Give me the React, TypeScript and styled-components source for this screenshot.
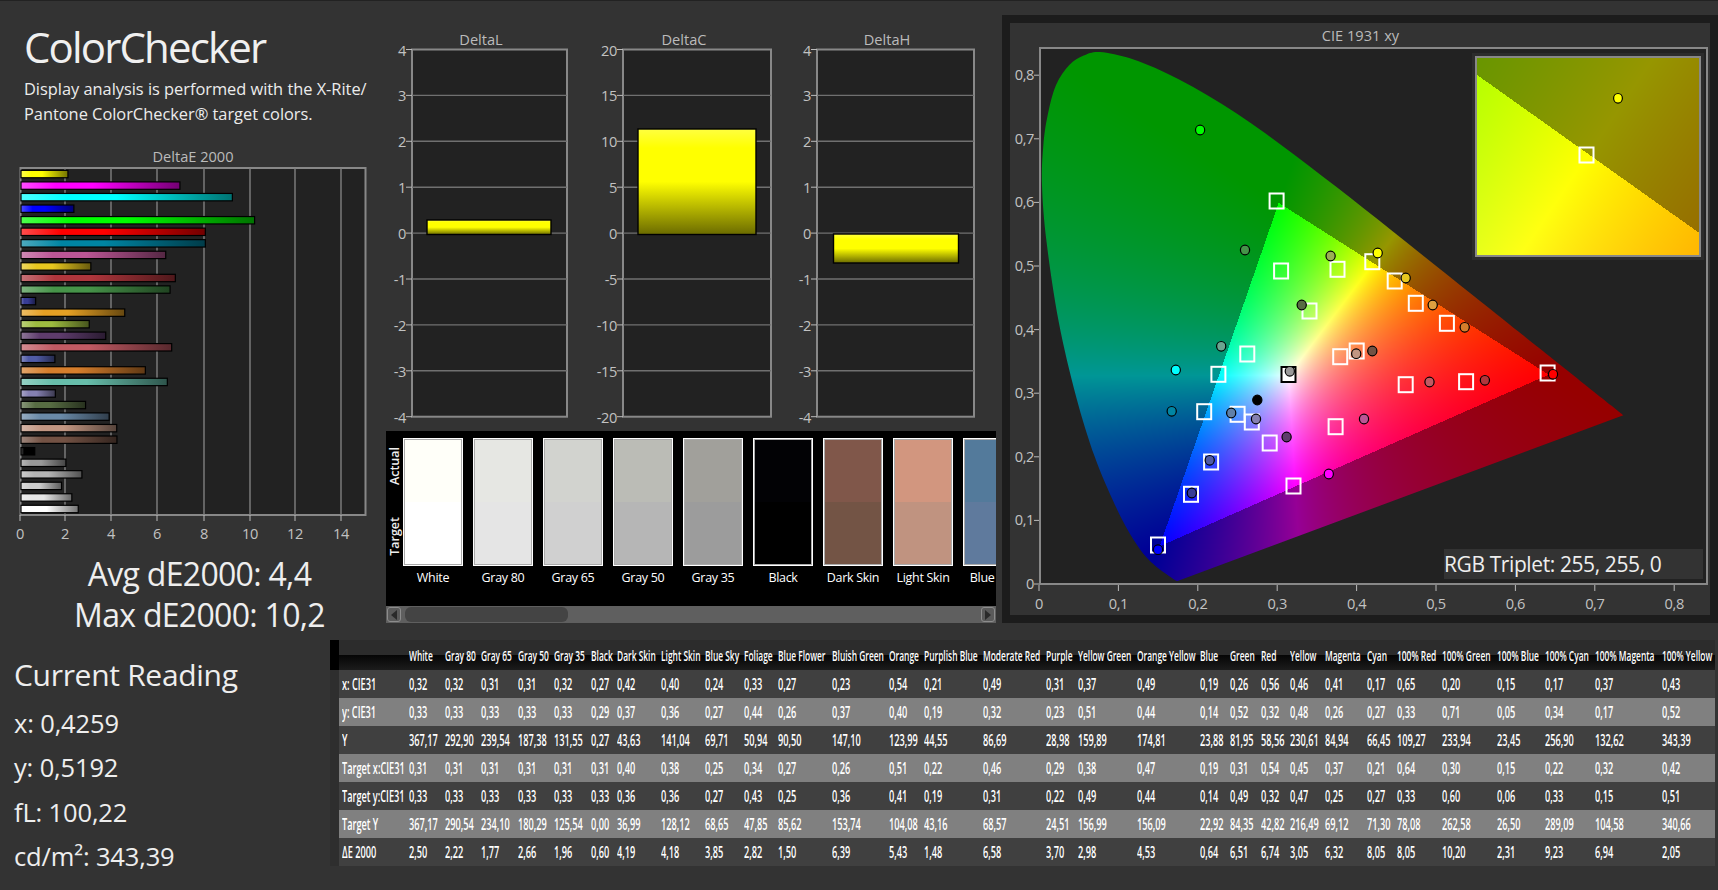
import { useEffect, useRef } from 'react';
import styled, { createGlobalStyle } from 'styled-components';

const NAMES = ['White', 'Gray 80', 'Gray 65', 'Gray 50', 'Gray 35', 'Black', 'Dark Skin', 'Light Skin', 'Blue Sky', 'Foliage', 'Blue Flower', 'Bluish Green', 'Orange', 'Purplish Blue', 'Moderate Red', 'Purple', 'Yellow Green', 'Orange Yellow', 'Blue', 'Green', 'Red', 'Yellow', 'Magenta', 'Cyan', '100% Red', '100% Green', '100% Blue', '100% Cyan', '100% Magenta', '100% Yellow'];

const ROWS: [string, string][] = [
	['x: CIE31', '0,32 0,32 0,31 0,31 0,32 0,27 0,42 0,40 0,24 0,33 0,27 0,23 0,54 0,21 0,49 0,31 0,37 0,49 0,19 0,26 0,56 0,46 0,41 0,17 0,65 0,20 0,15 0,17 0,37 0,43'],
	['y: CIE31', '0,33 0,33 0,33 0,33 0,33 0,29 0,37 0,36 0,27 0,44 0,26 0,37 0,40 0,19 0,32 0,23 0,51 0,44 0,14 0,52 0,32 0,48 0,26 0,27 0,33 0,71 0,05 0,34 0,17 0,52'],
	['Y', '367,17 292,90 239,54 187,38 131,55 0,27 43,63 141,04 69,71 50,94 90,50 147,10 123,99 44,55 86,69 28,98 159,89 174,81 23,88 81,95 58,56 230,61 84,94 66,45 109,27 233,94 23,45 256,90 132,62 343,39'],
	['Target x:CIE31', '0,31 0,31 0,31 0,31 0,31 0,31 0,40 0,38 0,25 0,34 0,27 0,26 0,51 0,22 0,46 0,29 0,38 0,47 0,19 0,31 0,54 0,45 0,37 0,21 0,64 0,30 0,15 0,22 0,32 0,42'],
	['Target y:CIE31', '0,33 0,33 0,33 0,33 0,33 0,33 0,36 0,36 0,27 0,43 0,25 0,36 0,41 0,19 0,31 0,22 0,49 0,44 0,14 0,49 0,32 0,47 0,25 0,27 0,33 0,60 0,06 0,33 0,15 0,51'],
	['Target Y', '367,17 290,54 234,10 180,29 125,54 0,00 36,99 128,12 68,65 47,85 85,62 153,74 104,08 43,16 68,57 24,51 156,99 156,09 22,92 84,35 42,82 216,49 69,12 71,30 78,08 262,58 26,50 289,09 104,58 340,66'],
	['ΔE 2000', '2,50 2,22 1,77 2,66 1,96 0,60 4,19 4,18 3,85 2,82 1,50 6,39 5,43 1,48 6,58 3,70 2,98 4,53 0,64 6,51 6,74 3,05 6,32 8,05 8,05 10,20 2,31 9,23 6,94 2,05'],
];

// left edge of every data column in the table, in page pixels
const COLUMN_X = [406.6, 442, 478.6, 515, 551.3, 588, 614.6, 658, 702, 741.3, 775.3, 829, 886, 921.3, 980, 1043.3, 1075.3, 1134, 1197.3, 1227.3, 1258, 1287.3, 1322.6, 1364.3, 1394, 1439.3, 1494.3, 1542.3, 1592.3, 1659, 1715];

// same order as the table, the bars run bottom to top
const BAR_COLORS = ['#ffffff', '#e6e6e6', '#cccccc', '#b4b4b4', '#999999', '#000000', '#735244', '#c29682', '#6a8aa8', '#576c43', '#8580b1', '#67bdaa', '#d67e2c', '#505ba6', '#c15a63', '#5e3c6c', '#9dbc40', '#e5a024', '#383d96', '#469449', '#af363c', '#e7c71f', '#bb5695', '#0085a3', '#ff0000', '#00ff00', '#0000ff', '#00ffff', '#ff00ff', '#ffff00'];

const SWATCHES = [
	{ name: 'White', actual: '#fffff9', target: '#ffffff' },
	{ name: 'Gray 80', actual: '#e6e7e3', target: '#e5e5e5' },
	{ name: 'Gray 65', actual: '#d2d3cf', target: '#d0d0d0' },
	{ name: 'Gray 50', actual: '#bbbcb6', target: '#b6b6b6' },
	{ name: 'Gray 35', actual: '#a1a09b', target: '#9c9c9c' },
	{ name: 'Black', actual: '#020205', target: '#000000' },
	{ name: 'Dark Skin', actual: '#80574a', target: '#735445' },
	{ name: 'Light Skin', actual: '#d2967f', target: '#c09380' },
	{ name: 'Blue Sky', actual: '#537a9b', target: '#5f7a9d' },
];

const DELTAS = [
	{ title: 'DeltaL', ticks: [4, 3, 2, 1, 0, -1, -2, -3, -4], gutter: 19, plot: 156, barX: 15, barW: 124, top: 220, bottom: 234.5 },
	{ title: 'DeltaC', ticks: [20, 15, 10, 5, 0, -5, -10, -15, -20], gutter: 27, plot: 149, barX: 15, barW: 118, top: 129, bottom: 234.5 },
	{ title: 'DeltaH', ticks: [4, 3, 2, 1, 0, -1, -2, -3, -4], gutter: 18, plot: 158, barX: 16.5, barW: 125, top: 234, bottom: 263 },
];

const LOCUS = [[0.1741, 0.005], [0.174, 0.005], [0.1738, 0.0049], [0.1736, 0.0049], [0.1733, 0.0048], [0.173, 0.0048], [0.1726, 0.0048], [0.1721, 0.0048], [0.1714, 0.0051], [0.1703, 0.0058], [0.1689, 0.0069], [0.1669, 0.0086], [0.1644, 0.0109], [0.1611, 0.0138], [0.1566, 0.0177], [0.151, 0.0227], [0.144, 0.0297], [0.1355, 0.0399], [0.1241, 0.0578], [0.1096, 0.0868], [0.0913, 0.1327], [0.0687, 0.2007], [0.0454, 0.295], [0.0235, 0.4127], [0.0082, 0.5384], [0.0025, 0.6274], [0.0042, 0.69], [0.0097, 0.7374], [0.0202, 0.7846], [0.0369, 0.816], [0.055, 0.831], [0.0756, 0.8365], [0.1142, 0.8262], [0.1547, 0.8059], [0.1929, 0.7816], [0.2296, 0.7543], [0.2658, 0.7243], [0.3016, 0.6923], [0.3373, 0.6589], [0.3731, 0.6245], [0.4087, 0.5896], [0.4441, 0.5547], [0.4788, 0.5202], [0.5125, 0.4866], [0.5448, 0.4544], [0.5752, 0.4242], [0.6029, 0.3965], [0.627, 0.3725], [0.6482, 0.3514], [0.6658, 0.334], [0.6801, 0.3197], [0.6915, 0.3083], [0.7006, 0.2993], [0.7079, 0.292], [0.714, 0.2859], [0.719, 0.2809], [0.723, 0.277], [0.726, 0.274], [0.7283, 0.2717], [0.73, 0.27], [0.732, 0.268], [0.7334, 0.2666], [0.7347, 0.2653]];

// measured marker places inside the plot, in plot pixels
const TARGETS = [[235.6, 152], [240.1, 222], [296.5, 220.3], [331.3, 212.7], [353.7, 232], [374.8, 254.3], [268.5, 262], [405.9, 274.3], [206.3, 305], [177.4, 325.3], [299.2, 307.7], [315.7, 302], [364.7, 335.7], [425.1, 332.7], [506.6, 324], [163.2, 362.7], [196.6, 365.3], [210.8, 373], [228.7, 394], [294.6, 377.7], [170.1, 413], [252.5, 437], [150, 445.3], [117, 496]];

const READINGS: [number, number, string][] = [
	[159.1, 81, '#00ff00'], [204, 201, '#469449'], [289.6, 207, '#9aae55'], [336.7, 204, '#ffff00'], [364.7, 229, '#e7c71f'], [391.7, 256, '#dea040'], [260.7, 256, '#576c43'], [423.7, 278.3, '#d67e2c'],
	[180.2, 297.3, '#6aa590'], [134.8, 321, '#00ffff'], [248.8, 322.3, '#999999'], [216.3, 351, '#000000'], [315.2, 304.7, '#c29682'], [331.3, 302, '#735244'], [388.5, 333, '#c15a63'], [443.9, 331.3, '#af363c'], [512, 325.3, '#ff0000'],
	[130.7, 362.3, '#0085a3'], [190.2, 364, '#6080a8'], [215, 370, '#8580b1'], [323, 370, '#bb5695'], [245.6, 388, '#5e3c6c'], [168.7, 411.3, '#505ba6'], [287.8, 425, '#ff00ff'], [150.8, 444, '#383d96'], [117, 500.7, '#0000ff'],
];

const shade = (hex: string, towards: number, amount: number) => {
	const n = parseInt(hex.slice(1), 16);
	const part = (v: number) => Math.round(v + (towards - v) * amount);
	return `rgb(${part((n >> 16) & 255)},${part((n >> 8) & 255)},${part(n & 255)})`;
};

const chromaColor = (x: number, y: number) => {
	const X = x / y;
	const Z = (1 - x - y) / y;
	const lin = [3.2406 * X - 1.5372 - 0.4986 * Z, -0.9689 * X + 1.8758 + 0.0415 * Z, 0.0557 * X - 0.204 + 1.057 * Z];
	const outside = lin.some((v) => v < 0);
	const clipped = lin.map((v) => Math.max(v, 0));
	const peak = Math.max(...clipped, 0.0001);
	const gain = outside ? 150 : 255;
	return clipped.map((v) => (v / peak) * gain);
};

const tracePath = (ctx: CanvasRenderingContext2D) => {
	const pts = LOCUS.map(([x, y]) => [x * 794 - 1, 535 - y * 636]);
	ctx.beginPath();
	ctx.moveTo(pts[0][0], pts[0][1]);
	for (let i = 0; i < pts.length - 1; i++) {
		const a = pts[Math.max(i - 1, 0)];
		const b = pts[i];
		const c = pts[i + 1];
		const d = pts[Math.min(i + 2, pts.length - 1)];
		ctx.bezierCurveTo(b[0] + (c[0] - a[0]) / 6, b[1] + (c[1] - a[1]) / 6, c[0] - (d[0] - b[0]) / 6, c[1] - (d[1] - b[1]) / 6, c[0], c[1]);
	}
	ctx.closePath();
};

const GamutCanvas = ({ width, height, toXY, locus }: { width: number; height: number; toXY: (px: number, py: number) => [number, number]; locus?: boolean }) => {
	const ref = useRef<HTMLCanvasElement>(null);

	useEffect(() => {
		const ctx = ref.current?.getContext('2d');
		if (!ctx) return;
		const buffer = document.createElement('canvas');
		buffer.width = width;
		buffer.height = height;
		const bufferCtx = buffer.getContext('2d')!;
		const image = bufferCtx.createImageData(width, height);
		for (let py = 0; py < height; py++) {
			for (let px = 0; px < width; px++) {
				const [x, y] = toXY(px, py);
				const [r, g, b] = chromaColor(x, Math.max(y, 0.001));
				const i = (py * width + px) * 4;
				image.data[i] = r;
				image.data[i + 1] = g;
				image.data[i + 2] = b;
				image.data[i + 3] = 255;
			}
		}
		bufferCtx.putImageData(image, 0, 0);
		ctx.save();
		ctx.clearRect(0, 0, width, height);
		if (locus) {
			tracePath(ctx);
			ctx.clip();
		}
		ctx.drawImage(buffer, 0, 0);
		ctx.restore();
	}, [width, height, toXY, locus]);

	return <Layer ref={ref} width={width} height={height} />;
};

const plotToXY = (px: number, py: number): [number, number] => [(px + 1) / 794, (535 - py) / 636];
const insetToXY = (px: number, py: number): [number, number] => [0.419 + (px + 1477 - 1586.5) / 4500, 0.505 - (py + 59 - 155.7) / 4030];

const DeltaEChart = () => {
	const grid = [65, 111, 157, 204, 250, 295, 341];
	const ticks = [20, ...grid];
	return (
		<ChartSvg width={386} height={378}>
			<defs>
				{BAR_COLORS.map((color, i) => (
					<linearGradient key={i} id={`bar-${i}`}>
						<stop offset='0' stopColor={shade(color, 255, 0.3)} />
						<stop offset='0.22' stopColor={color} />
						<stop offset='0.45' stopColor={color} />
						<stop offset='1' stopColor={shade(color, 0, 0.55)} />
					</linearGradient>
				))}
			</defs>
			<rect x={20.5} y={1} width={345} height={347} fill='#222' stroke='#888' strokeWidth={2} />
			{grid.map((x) => (
				<line key={x} x1={x} x2={x} y1={1} y2={348} stroke='#808080' strokeWidth={1.4} />
			))}
			{ticks.map((x) => (
				<line key={x} x1={x} x2={x} y1={348} y2={354} stroke='#bbb' />
			))}
			{BAR_COLORS.map((_, i) => {
				const value = parseFloat(ROWS[6][1].split(' ')[i].replace(',', '.'));
				return <rect key={i} x={21} y={342 - i * 11.55 - 3.7} width={value * 22.9} height={7.4} fill={`url(#bar-${i})`} stroke='#000' strokeWidth={1.2} />;
			})}
			{ticks.map((x, i) => (
				<AxisText key={x} x={x} y={372} textAnchor='middle'>
					{i * 2}
				</AxisText>
			))}
		</ChartSvg>
	);
};

const DeltaChart = ({ title, ticks, gutter, plot, barX, barW, top, bottom }: (typeof DELTAS)[number]) => {
	const y0 = 7.5;
	const step = 45.9;
	const gradientId = `delta-${title}`;
	return (
		<DeltaBlock>
			<ChartTitle>{title}</ChartTitle>
			<DeltaSvg width={176} height={385}>
				<defs>
					<linearGradient id={gradientId} x2='0' y2='1'>
						<stop offset='0' stopColor='#ffff40' />
						<stop offset='0.18' stopColor='#ffff00' />
						<stop offset='0.5' stopColor='#ffff00' />
						<stop offset='1' stopColor='#6b6b00' />
					</linearGradient>
				</defs>
				<rect x={gutter} y={y0} width={plot - 1} height={step * 8} fill='#222' stroke='#888' strokeWidth={2} />
				{ticks.map((tick, i) => (
					<g key={tick}>
						{i > 0 && i < 8 && <line x1={gutter} x2={gutter + plot - 1} y1={y0 + i * step} y2={y0 + i * step} stroke='#707070' strokeWidth={1.4} />}
						<line x1={gutter - 6} x2={gutter} y1={y0 + i * step} y2={y0 + i * step} stroke='#bbb' />
						<AxisText x={gutter - 6} y={y0 + i * step + 6} textAnchor='end'>
							{tick}
						</AxisText>
					</g>
				))}
				<rect x={gutter + barX} y={top - 42} width={barW} height={bottom - top} fill={`url(#${gradientId})`} stroke='#000' strokeWidth={1.4} />
			</DeltaSvg>
		</DeltaBlock>
	);
};

const CieChart = () => {
	const ticks = ['0', '0,1', '0,2', '0,3', '0,4', '0,5', '0,6', '0,7', '0,8'];
	return (
		<CieFrame>
			<CieTitle>CIE 1931 xy</CieTitle>
			<CieGrid>
				<YAxis width={29} height={540}>
					{ticks.map((tick, i) => (
						<g key={tick}>
							<line x1={24} x2={29} y1={537 - i * 63.6} y2={537 - i * 63.6} stroke='#bbb' />
							<AxisText x={24} y={537 - i * 63.6 + 5} textAnchor='end'>
								{tick}
							</AxisText>
						</g>
					))}
				</YAxis>
				<CiePlot>
					<GamutCanvas width={665} height={534} toXY={plotToXY} locus />
					<MarkerLayer width={665} height={534}>
						{TARGETS.map(([x, y]) => (
							<rect key={`${x}-${y}`} x={x - 7} y={y - 7.5} width={14} height={15} fill='none' stroke='#fff' strokeWidth={2} />
						))}
						<rect x={240.5} y={318} width={14} height={15} fill='#fff' stroke='#000' strokeWidth={2} />
						{READINGS.map(([x, y, color]) => (
							<ellipse key={`${x}-${y}`} cx={x} cy={y} rx={4.6} ry={4.8} fill={color} stroke='#000' strokeWidth={1.2} />
						))}
					</MarkerLayer>
					<InsetBox>
						<InsetPlot>
							<GamutCanvas width={222} height={197} toXY={insetToXY} />
							<MarkerLayer width={222} height={197}>
								<rect x={102.5} y={89.5} width={14} height={15} fill='none' stroke='#fff' strokeWidth={2} />
								<ellipse cx={141} cy={40.3} rx={4.4} ry={4.8} fill='#ffff00' stroke='#000' strokeWidth={1.2} />
							</MarkerLayer>
						</InsetPlot>
					</InsetBox>
					<Triplet>RGB Triplet: 255, 255, 0</Triplet>
				</CiePlot>
				<span />
				<XAxis width={672} height={30}>
					{ticks.map((tick, i) => (
						<g key={tick}>
							<line x1={i * 79.4} x2={i * 79.4} y1={0} y2={6} stroke='#bbb' />
							<AxisText x={i * 79.4} y={24} textAnchor='middle'>
								{tick}
							</AxisText>
						</g>
					))}
				</XAxis>
			</CieGrid>
		</CieFrame>
	);
};

const App = () => {
	return (
		<Page>
			<GlobalStyle />
			<TopRow>
				<LeftColumn>
					<Title>ColorChecker</Title>
					<Lead>
						Display analysis is performed with the X-Rite/
						<br />
						Pantone ColorChecker® target colors.
					</Lead>
					<ChartTitle>DeltaE 2000</ChartTitle>
					<DeltaEChart />
					<Summary>Avg dE2000: 4,4</Summary>
					<Summary>Max dE2000: 10,2</Summary>
				</LeftColumn>
				<MiddleColumn>
					<DeltaRow>
						{DELTAS.map((delta) => (
							<DeltaChart key={delta.title} {...delta} />
						))}
					</DeltaRow>
					<SwatchPanel>
						<SwatchArea>
							<SideLabels>
								<SideLabel>Actual</SideLabel>
								<SideLabel>Target</SideLabel>
							</SideLabels>
							{SWATCHES.map((swatch) => (
								<SwatchItem key={swatch.name}>
									<Swatch>
										<SwatchHalf $color={swatch.actual} />
										<SwatchHalf $color={swatch.target} />
									</Swatch>
									<SwatchName>{swatch.name}</SwatchName>
								</SwatchItem>
							))}
						</SwatchArea>
						<ScrollBar>
							<ScrollButton>
								<ArrowLeft />
							</ScrollButton>
							<ScrollThumb />
							<ScrollButton>
								<ArrowRight />
							</ScrollButton>
						</ScrollBar>
					</SwatchPanel>
				</MiddleColumn>
				<CieChart />
			</TopRow>
			<BottomRow>
				<Readout>
					<ReadoutTitle>Current Reading</ReadoutTitle>
					<ReadoutLine>x: 0,4259</ReadoutLine>
					<ReadoutLine>y: 0,5192</ReadoutLine>
					<ReadoutLine>fL: 100,22</ReadoutLine>
					<ReadoutLine>cd/m²: 343,39</ReadoutLine>
				</Readout>
				<DataTable>
					<colgroup>
						<Col $width={9} />
						<Col $width={COLUMN_X[0] - 339} />
						{NAMES.map((name, i) => (
							<Col key={name} $width={COLUMN_X[i + 1] - COLUMN_X[i]} />
						))}
					</colgroup>
					<thead>
						<tr>
							<CornerCell />
							<HeadCell />
							{NAMES.map((name) => (
								<HeadCell key={name}>
									<HeadText>{name}</HeadText>
								</HeadCell>
							))}
						</tr>
					</thead>
					<tbody>
						{ROWS.map(([label, values], i) => (
							<DataRow key={label} $light={i % 2 === 1}>
								<SelectorCell />
								<DataCell>
									<CellText>{label}</CellText>
								</DataCell>
								{values.split(' ').map((value, j) => (
									<DataCell key={j}>
										<CellText>{value}</CellText>
									</DataCell>
								))}
							</DataRow>
						))}
					</tbody>
				</DataTable>
			</BottomRow>
		</Page>
	);
};

export default App;

const GlobalStyle = createGlobalStyle`
	html, body {
		margin: 0;
		background: #333;
		overflow: hidden;
	}
	body {
		font-family: 'Open Sans', 'Noto Sans', sans-serif;
		color: #eee;
	}
`;

const Page = styled.div`
	width: 1718px;
	height: 890px;
	box-sizing: border-box;
	border-top: 1px solid #222;
	overflow: hidden;
	background: #333;
`;

const TopRow = styled.div`
	display: flex;
	height: 639px;
`;

const LeftColumn = styled.div`
	width: 386px;
	flex: none;
	padding-top: 18px;
	box-sizing: border-box;
`;

const Title = styled.h1`
	margin: 0 0 2px;
	padding-left: 24px;
	font-size: 42px;
	line-height: 56px;
	font-weight: 400;
	letter-spacing: -1.85px;
	color: #f0f0f0;
`;

const Lead = styled.p`
	margin: 0 0 20px;
	padding-left: 24px;
	font-size: 16.4px;
	line-height: 24.7px;
	letter-spacing: -0.02px;
	color: #ececec;
	white-space: nowrap;
`;

const ChartTitle = styled.div`
	font-size: 14.6px;
	line-height: 20px;
	text-align: center;
	color: #bbb;
`;

const CieTitle = styled(ChartTitle)`
	margin: 2px 0;
`;

const ChartSvg = styled.svg`
	display: block;
	margin: 1px 0 8px;
`;

const AxisText = styled.text`
	font-size: 14.6px;
	letter-spacing: -0.4px;
	fill: #c2c2c2;
`;

const Summary = styled.div`
	text-align: center;
	width: 399px;
	font-size: 32px;
	line-height: 41px;
	letter-spacing: -0.7px;
	color: #eee;
	white-space: nowrap;
`;

const MiddleColumn = styled.div`
	width: 616px;
	flex: none;
	padding-top: 28px;
	box-sizing: border-box;
`;

const DeltaRow = styled.div`
	display: flex;
	gap: 27px;
	padding-left: 7px;
`;

const DeltaBlock = styled.div`
	width: 176px;
`;

const DeltaSvg = styled.svg`
	display: block;
	margin-top: -7px;
	overflow: visible;
`;

const SwatchPanel = styled.div`
	width: 610px;
	margin-top: 4px;
	background: #000;
`;

const SwatchArea = styled.div`
	display: flex;
	height: 175px;
	padding-top: 7px;
	box-sizing: border-box;
	overflow: hidden;
`;

const SideLabels = styled.div`
	width: 17px;
	flex: none;
	display: flex;
	flex-direction: column;
	align-items: center;
	justify-content: space-between;
	height: 128px;
	padding: 9px 0 10px;
	box-sizing: border-box;
`;

const SideLabel = styled.span`
	writing-mode: vertical-rl;
	transform: rotate(180deg);
	font-size: 12.5px;
	font-weight: 600;
	line-height: 14px;
	color: #eee;
`;

const SwatchItem = styled.div`
	width: 60px;
	flex: none;
	margin-right: 10px;
`;

const Swatch = styled.div`
	display: flex;
	flex-direction: column;
	height: 128px;
	box-sizing: border-box;
	border: 1px solid #fff;
	box-shadow: inset 0 0 0 1px #aaa;
`;

const SwatchHalf = styled.div<{ $color: string }>`
	flex: 1;
	margin: 1px;
	background: ${({ $color }) => $color};
	&:first-child {
		margin-bottom: 0;
	}
	&:last-child {
		margin-top: 0;
	}
`;

const SwatchName = styled.div`
	margin: 3px -10px 0;
	text-align: center;
	font-size: 12.5px;
	line-height: 18px;
	letter-spacing: -0.3px;
	color: #fff;
	white-space: nowrap;
`;

const ScrollBar = styled.div`
	display: flex;
	align-items: center;
	height: 17px;
	padding: 0 1px;
	background: #5f5f5f;
`;

const ScrollButton = styled.div`
	display: flex;
	align-items: center;
	justify-content: center;
	width: 14px;
	height: 15px;
	box-sizing: border-box;
	background: #5a5a5a;
	border: 1px solid #8c8c8c;
	border-radius: 3px;
`;

const ArrowLeft = styled.div`
	border-style: solid;
	border-width: 5px 6px 5px 0;
	border-color: transparent #2a2a2a transparent transparent;
`;

const ArrowRight = styled.div`
	border-style: solid;
	border-width: 5px 0 5px 6px;
	border-color: transparent transparent transparent #2a2a2a;
`;

const ScrollThumb = styled.div`
	width: 163px;
	height: 15px;
	margin: 0 auto 0 4px;
	border-radius: 6px;
	background: #444;
`;

const CieFrame = styled.div`
	flex: none;
	align-self: flex-start;
	width: 716px;
	height: 608px;
	margin-top: 14px;
	box-sizing: border-box;
	padding: 8px 7px 7px 8px;
	background: #333;
	box-shadow: inset 0 0 0 8px #1c1c1c;
`;

const CieGrid = styled.div`
	display: grid;
	grid-template-columns: 29px 669px;
	grid-template-rows: 538px 1fr;
`;

const YAxis = styled.svg`
	display: block;
	overflow: visible;
`;

const XAxis = styled.svg`
	display: block;
	overflow: visible;
`;

const CiePlot = styled.div`
	position: relative;
	box-sizing: border-box;
	border: 2px solid #888;
	background: #222;
`;

const Layer = styled.canvas`
	position: absolute;
	inset: 0;
`;

const MarkerLayer = styled.svg`
	position: absolute;
	inset: 0;
`;

const InsetBox = styled.div`
	position: absolute;
	top: 4px;
	right: 2px;
	padding: 3px;
	background: #2c2c2c;
`;

const InsetPlot = styled.div`
	position: relative;
	width: 222px;
	height: 197px;
	border: 2px solid #888;
`;

const Triplet = styled.div`
	position: absolute;
	left: 403px;
	top: 500px;
	width: 259px;
	height: 30px;
	background: #333;
	font-size: 21px;
	line-height: 30px;
	letter-spacing: -0.4px;
	color: #eee;
	white-space: nowrap;
`;

const BottomRow = styled.div`
	display: flex;
	height: 250px;
`;

const Readout = styled.div`
	width: 330px;
	flex: none;
	padding: 15px 0 0 14px;
	box-sizing: border-box;
`;

const ReadoutTitle = styled.div`
	margin-bottom: 5.5px;
	font-size: 30px;
	line-height: 40px;
	letter-spacing: -0.3px;
	color: #eee;
`;

const ReadoutLine = styled.div`
	font-size: 25.5px;
	line-height: 44.5px;
	letter-spacing: -0.15px;
	color: #eee;
`;

const DataTable = styled.table`
	table-layout: fixed;
	width: 1385px;
	height: 226px;
	border-collapse: collapse;
	align-self: flex-start;
`;

const Col = styled.col<{ $width: number }>`
	width: ${({ $width }) => $width}px;
`;

const CornerCell = styled.th`
	padding: 0;
	height: 30px;
	background: #000;
`;

const HeadCell = styled.th`
	padding: 0 0 0 2.7px;
	height: 30px;
	text-align: left;
	font-weight: 400;
	background: linear-gradient(#2c2c2c 0 50%, #050505 50%, #1c1c1c 100%);
`;

const HeadText = styled.span`
	display: inline-block;
	font-size: 15px;
	font-weight: 600;
	line-height: 30px;
	white-space: nowrap;
	color: #fff;
	transform: scaleX(0.56);
	transform-origin: left center;
`;

const DataRow = styled.tr<{ $light: boolean }>`
	background: ${({ $light }) => ($light ? '#808080' : '#404040')};
`;

const SelectorCell = styled.td`
	padding: 0;
	height: 28px;
	background: #2e2e2e;
`;

const DataCell = styled.td`
	padding: 0 0 0 2.7px;
	height: 28px;
	overflow: visible;
`;

const CellText = styled.span`
	display: inline-block;
	font-size: 17px;
	font-weight: 600;
	line-height: 28px;
	white-space: nowrap;
	color: #fff;
	transform: scaleX(0.54);
	transform-origin: left center;
`;
